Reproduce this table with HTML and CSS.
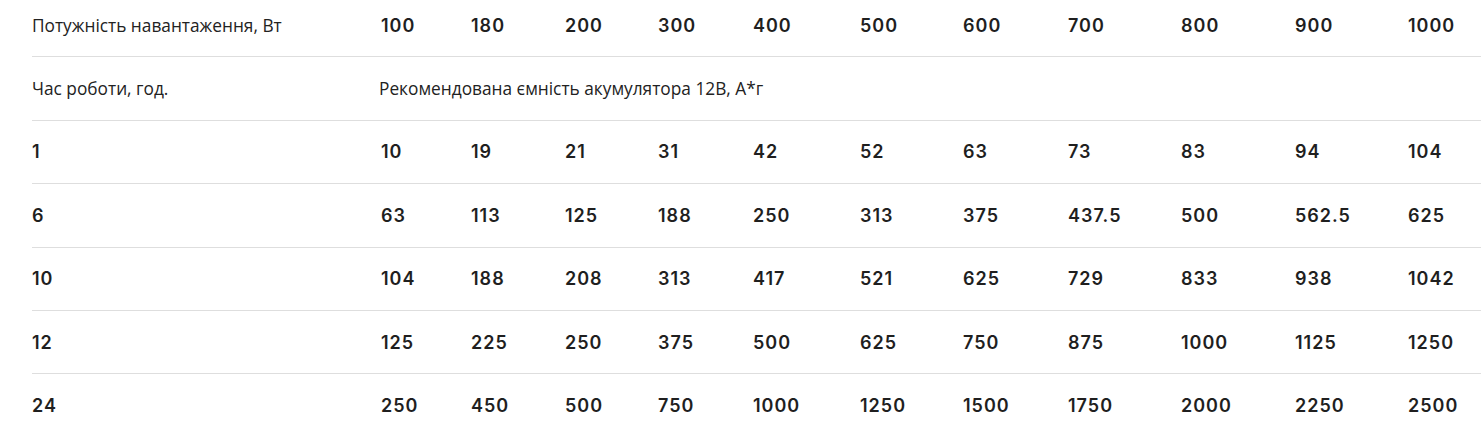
FILE: index.html
```html
<!DOCTYPE html>
<html lang="uk">
<head>
<meta charset="utf-8">
<title>Таблиця</title>
<link rel="stylesheet" href="styles.css">
</head>
<body>
<div class="wrap">
<table class="cap">
<colgroup>
<col class="c0"><col class="c1"><col class="c2"><col class="c3"><col class="c4"><col class="c5"><col class="c6"><col class="c7"><col class="c8"><col class="c9"><col class="c10"><col class="c11">
</colgroup>
<tbody>
<tr><td class="lbl">Потужність навантаження, Вт</td><td>100</td><td>180</td><td>200</td><td>300</td><td>400</td><td>500</td><td>600</td><td>700</td><td>800</td><td>900</td><td>1000</td></tr>
<tr><td class="lbl">Час роботи, год.</td><td class="lbl span" colspan="11">Рекомендована ємність акумулятора 12В, А*г</td></tr>
<tr><td>1</td><td>10</td><td>19</td><td>21</td><td>31</td><td>42</td><td>52</td><td>63</td><td>73</td><td>83</td><td>94</td><td>104</td></tr>
<tr><td>6</td><td>63</td><td>113</td><td>125</td><td>188</td><td>250</td><td>313</td><td>375</td><td>437.5</td><td>500</td><td>562.5</td><td>625</td></tr>
<tr><td>10</td><td>104</td><td>188</td><td>208</td><td>313</td><td>417</td><td>521</td><td>625</td><td>729</td><td>833</td><td>938</td><td>1042</td></tr>
<tr><td>12</td><td>125</td><td>225</td><td>250</td><td>375</td><td>500</td><td>625</td><td>750</td><td>875</td><td>1000</td><td>1125</td><td>1250</td></tr>
<tr class="last"><td>24</td><td>250</td><td>450</td><td>500</td><td>750</td><td>1000</td><td>1250</td><td>1500</td><td>1750</td><td>2000</td><td>2250</td><td>2500</td></tr>
</tbody>
</table>
</div>
</body>
</html>
```
FILE: styles.css
```css
html, body {
  margin: 0;
  padding: 0;
  background: #ffffff;
  overflow: hidden;
}
.wrap {
  padding-left: 32px;
  margin-top: -6px;
}
.cap {
  border-collapse: collapse;
  table-layout: fixed;
  width: 1520px;
  color: #1f1f1f;
  font-family: Inter, "Noto Sans", sans-serif;
  font-weight: 600;
  font-size: 18px;
  letter-spacing: 1px;
}
.c0 { width: 347px; }
.c1 { width: 90px; }
.c2 { width: 94px; }
.c3 { width: 93px; }
.c4 { width: 95px; }
.c5 { width: 107px; }
.c6 { width: 103px; }
.c7 { width: 105px; }
.c8 { width: 113px; }
.c9 { width: 114px; }
.c10 { width: 113px; }
.c11 { width: 146px; }
.cap td {
  height: 62.4px;
  padding: 0 0 0 2px;
  vertical-align: middle;
  border-bottom: 1px solid #dedede;
  white-space: nowrap;
  overflow: hidden;
}
.cap td:first-child {
  padding-left: 0;
}
.cap tr.last td {
  border-bottom: 0;
}
.cap td.lbl {
  font-family: "Open Sans", "Noto Sans", sans-serif;
  font-weight: 400;
  font-size: 17.3px;
  letter-spacing: 0;
  color: #222222;
}
.cap td.span {
  padding-left: 0;
}
```
